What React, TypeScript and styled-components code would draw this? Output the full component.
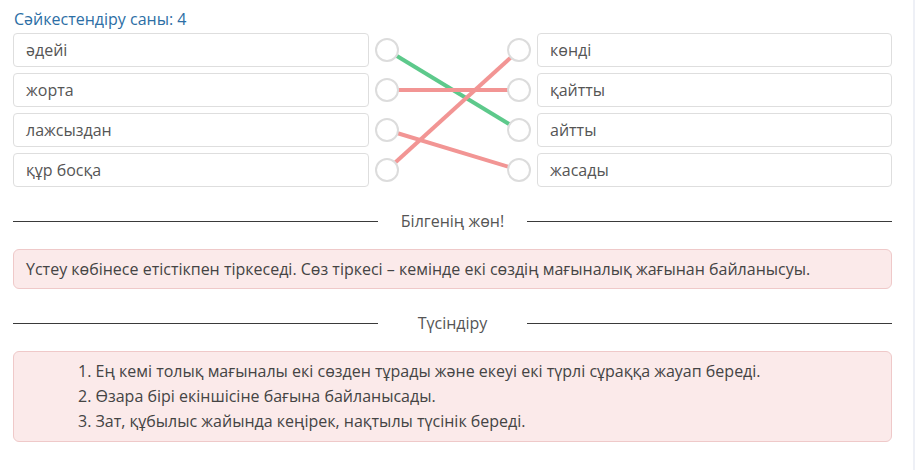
import React from 'react'
import styled, { createGlobalStyle } from 'styled-components'

const GlobalStyle = createGlobalStyle`
  html, body {
    margin: 0;
    padding: 0;
    background: #ffffff;
    font-family: 'Open Sans', 'Noto Sans', sans-serif;
  }
`

const leftItems = ['әдейі', 'жорта', 'лажсыздан', 'құр босқа']
const rightItems = ['көнді', 'қайтты', 'айтты', 'жасады']

// left index -> right index, correct?
const links = [
  { from: 0, to: 2, ok: true },
  { from: 1, to: 1, ok: false },
  { from: 2, to: 3, ok: false },
  { from: 3, to: 0, ok: false }
]

const explain = [
  'Ең кемі толық мағыналы екі сөзден тұрады және екеуі екі түрлі сұраққа жауап береді.',
  'Өзара бірі екіншісіне бағына байланысады.',
  'Зат, құбылыс жайында кеңірек, нақтылы түсінік береді.'
]

const ROW_H = 34
const ROW_GAP = 6

export default function App() {
  const rowY = (i: number) => i * (ROW_H + ROW_GAP) + ROW_H / 2
  return (
    <Page>
      <GlobalStyle />
      <Title>Сәйкестендіру саны: 4</Title>
      <MatchGrid>
        <Lines width='168' height='154' viewBox='0 0 168 154'>
          {links.map((l) => (
            <line
              key={l.from}
              x1={18}
              y1={rowY(l.from)}
              x2={150}
              y2={rowY(l.to)}
              stroke={l.ok ? '#5dc98b' : '#f29594'}
              strokeWidth={4}
            />
          ))}
        </Lines>
        {leftItems.map((w, i) => (
          <React.Fragment key={w}>
            <WordBox $col={1} $row={i + 1}>{w}</WordBox>
            <Dot $col={2} $row={i + 1} />
            <Dot $col={4} $row={i + 1} />
            <WordBox $col={5} $row={i + 1}>{rightItems[i]}</WordBox>
          </React.Fragment>
        ))}
      </MatchGrid>

      <Divider>
        <Rule />
        <DividerLabel>Білгенің жөн!</DividerLabel>
        <Rule />
      </Divider>
      <InfoBox>
        Үстеу көбінесе етістікпен тіркеседі. Сөз тіркесі – кемінде екі сөздің
        мағыналық жағынан байланысуы.
      </InfoBox>

      <Divider>
        <Rule />
        <DividerLabel>Түсіндіру</DividerLabel>
        <Rule />
      </Divider>
      <ExplainBox>
        {explain.map((t, i) => (
          <ExplainItem key={i}>
            {i + 1}. {t}
          </ExplainItem>
        ))}
      </ExplainBox>
    </Page>
  )
}

const Page = styled.div`
  width: 879px;
  padding: 9px 21px 0 13px;
  box-sizing: content-box;
  border-right: 2px solid #eef0f6;
  min-height: 461px;
`

const Title = styled.div`
  color: #2c6ea5;
  font-size: 16px;
  line-height: 20px;
  margin: 0 0 4px 1px;
`

const MatchGrid = styled.div`
  position: relative;
  display: grid;
  grid-template-columns: 356px 36px 96px 36px 355px;
  grid-template-rows: repeat(4, ${ROW_H}px);
  row-gap: ${ROW_GAP}px;
`

const Lines = styled.svg`
  position: absolute;
  left: 356px;
  top: 0;
  z-index: 0;
`

const WordBox = styled.div<{ $col: number; $row: number }>`
  grid-column: ${(p) => p.$col};
  grid-row: ${(p) => p.$row};
  display: flex;
  align-items: center;
  padding: 0 12px;
  border: 1px solid #dedede;
  border-radius: 4px;
  color: #555555;
  font-size: 16px;
`

const Dot = styled.div<{ $col: number; $row: number }>`
  grid-column: ${(p) => p.$col};
  grid-row: ${(p) => p.$row};
  position: relative;
  z-index: 1;
  justify-self: center;
  align-self: center;
  width: 20px;
  height: 20px;
  border: 2px solid #dcdcdc;
  border-radius: 50%;
  background: #ffffff;
`

const Divider = styled.div`
  display: grid;
  grid-template-columns: 1fr 149px 1fr;
  align-items: center;
  margin: 23px 0 17px;
`

const Rule = styled.div`
  height: 1px;
  background: #3a3a3a;
`

const DividerLabel = styled.div`
  text-align: center;
  color: #555555;
  font-size: 16px;
  line-height: 22px;
`

const InfoBox = styled.div`
  display: flex;
  align-items: center;
  height: 38px;
  padding: 0 12px;
  background: #fbeaea;
  border: 1px solid #efc9c9;
  border-radius: 6px;
  color: #444444;
  font-size: 16px;
`

const ExplainBox = styled.div`
  padding: 7px 12px 7px 64px;
  background: #fbeaea;
  border: 1px solid #efc9c9;
  border-radius: 6px;
  color: #444444;
  font-size: 16px;
`

const ExplainItem = styled.div`
  line-height: 25px;
`
